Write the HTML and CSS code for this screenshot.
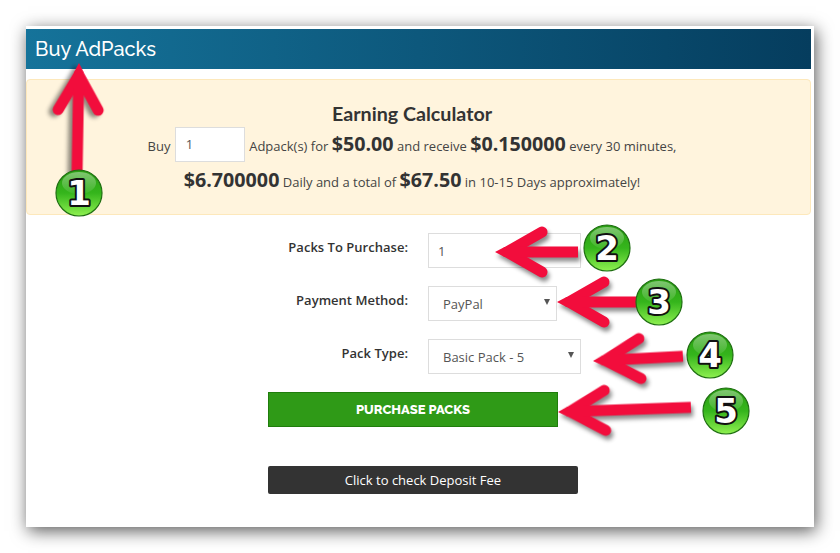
FILE: index.html
```html
<!DOCTYPE html>
<html lang="en">
<head>
    <meta charset="UTF-8">
    <meta name="viewport" content="width=device-width, initial-scale=1.0">
    <title>Buy AdPacks</title>
    <link rel="stylesheet" href="styles.css">
</head>
<body>
    <div class="panel">
        <h1 class="panel-title">Buy AdPacks</h1>

        <div class="calculator">
            <h3 class="calculator-title">Earning Calculator</h3>
            <p class="calculator-line first">
                Buy <input type="text" class="calculator-input" value="1"> Adpack(s) for <b>$50.00</b> and receive <b>$0.150000</b> every 30 minutes,
            </p>
            <p class="calculator-line">
                <b>$6.700000</b> Daily and a total of <b>$67.50</b> in 10-15 Days approximately!
            </p>
        </div>

        <form class="purchase-form">
            <label for="packs">Packs To Purchase:</label>
            <input type="text" id="packs" class="field wide" value="1">

            <label for="method">Payment Method:</label>
            <div class="select-wrap narrow">
                <select id="method" class="field">
                    <option>PayPal</option>
                </select>
            </div>

            <label for="type">Pack Type:</label>
            <div class="select-wrap wide">
                <select id="type" class="field">
                    <option>Basic Pack - 5</option>
                </select>
            </div>

            <button type="submit" class="btn-purchase">PURCHASE PACKS</button>
        </form>

        <button type="button" class="btn-fee">Click to check Deposit Fee</button>
    </div>

    <!-- flechas y numeros dibujados encima de la captura -->
    <svg class="notes" width="840" height="553" viewBox="0 0 840 553">
        <defs>
            <g id="head">
                <path class="arrow-barb" d="M12 0 L47 -20 M12 0 L47 20"/>
                <polygon class="arrow-fill" points="0,0 9.5,-5 32,-5 32,5 9.5,5"/>
            </g>
            <linearGradient id="ball" x1="0" y1="0" x2="0" y2="1">
                <stop offset="0" stop-color="#2a9e12"/>
                <stop offset="0.5" stop-color="#35b51c"/>
                <stop offset="1" stop-color="#8ef050"/>
            </linearGradient>
            <linearGradient id="gloss" x1="0" y1="0" x2="0" y2="1">
                <stop offset="0" stop-color="#ffffff" stop-opacity="0.4"/>
                <stop offset="1" stop-color="#ffffff" stop-opacity="0.05"/>
            </linearGradient>
            <g id="ball-shape">
                <circle r="23" fill="url(#ball)" stroke="#1f6f12" stroke-width="1.2"/>
                <ellipse cy="-10" rx="17" ry="11" fill="url(#gloss)"/>
            </g>
        </defs>

        <g class="arrow" transform="translate(79 63) rotate(91)">
            <use href="#head"/>
            <line class="arrow-shaft" x1="25" y1="0" x2="112" y2="0"/>
        </g>
        <g class="arrow" transform="translate(495 252)">
            <use href="#head"/>
            <line class="arrow-shaft" x1="25" y1="0" x2="83" y2="0"/>
        </g>
        <g class="arrow" transform="translate(557 302)">
            <use href="#head"/>
            <line class="arrow-shaft" x1="25" y1="0" x2="85" y2="0"/>
        </g>
        <g class="arrow" transform="translate(593 361) rotate(-3)">
            <use href="#head"/>
            <line class="arrow-shaft" x1="25" y1="0" x2="90" y2="0"/>
        </g>
        <g class="arrow" transform="translate(558 412) rotate(-2)">
            <use href="#head"/>
            <line class="arrow-shaft" x1="25" y1="0" x2="133" y2="0"/>
        </g>

        <g class="badge" transform="translate(79 193)"><use href="#ball-shape"/><text y="12">1</text></g>
        <g class="badge" transform="translate(607 248)"><use href="#ball-shape"/><text y="12">2</text></g>
        <g class="badge" transform="translate(659 302)"><use href="#ball-shape"/><text y="12">3</text></g>
        <g class="badge" transform="translate(710 355)"><use href="#ball-shape"/><text y="12">4</text></g>
        <g class="badge" transform="translate(726 411)"><use href="#ball-shape"/><text y="12">5</text></g>
    </svg>
</body>
</html>
```

FILE: styles.css
```css
html, body {
    height: 553px;
    overflow: hidden;
}

body {
    font-family: "Open Sans", sans-serif;
    background-color: #fff;
    color: #333;
    margin: 0;
    padding: 26px 26px 0;
    box-sizing: border-box;
}

.panel {
    box-sizing: border-box;
    width: 788px;
    height: 501px;
    padding: 3px 3px 0 0;
    background-color: #fff;
    box-shadow: 2px 4px 16px rgba(0, 0, 0, 0.65);
}

.panel-title {
    margin: 0 0 10px;
    height: 40px;
    padding: 0 9px;
    font-family: "Raleway", Lato, sans-serif;
    font-size: 20px;
    font-weight: 500;
    line-height: 40px;
    color: #fff;
    background: linear-gradient(to right, #15739a, #053d5e);
}

.calculator {
    box-sizing: border-box;
    height: 136px;
    padding: 22px 13px 0 0;
    text-align: center;
    background-color: #fff4dd;
    border: 1px solid #fde8bb;
    border-radius: 4px;
}

.calculator-title {
    margin: 0;
    font-family: Lato, sans-serif;
    font-size: 19.7px;
    font-weight: 700;
    line-height: 24px;
    color: #333;
}

.calculator-line {
    margin: 0;
    font-size: 13px;
    line-height: 35px;
    color: #444;
}

.calculator-line.first {
    height: 36px;
    margin-top: 0;
}

.calculator-line b {
    font-size: 19.7px;
    font-weight: 700;
    color: #333;
}

.calculator-input {
    box-sizing: border-box;
    width: 70px;
    height: 35px;
    margin: 0 1px;
    padding: 0 10px;
    vertical-align: 2px;
    font-family: "Open Sans", sans-serif;
    font-size: 13px;
    color: #555;
    background-color: #fff;
    border: 1px solid #ddd;
}

.purchase-form {
    display: grid;
    grid-template-columns: 140px 1fr;
    column-gap: 20px;
    row-gap: 18px;
    width: 310px;
    margin: 18px 0 0 242px;
}

.purchase-form label {
    padding-top: 6px;
    font-size: 13px;
    font-weight: 600;
    letter-spacing: 0.02px;
    line-height: 16px;
    text-align: right;
    color: #333;
}

.field {
    box-sizing: border-box;
    display: block;
    width: 100%;
    height: 35px;
    padding: 0 9px;
    font-family: "Open Sans", sans-serif;
    font-size: 13px;
    color: #555;
    background-color: #fff;
    border: 1px solid #ddd;
    border-radius: 0;
    appearance: none;
}

select.field {
    padding-left: 14px;
}

.wide {
    width: 153px;
}

.narrow {
    width: 129px;
}

.select-wrap {
    position: relative;
}

.select-wrap::after {
    content: "";
    position: absolute;
    top: 13px;
    right: 7px;
    border-top: 6px solid #555;
    border-left: 3px solid transparent;
    border-right: 3px solid transparent;
}

.btn-purchase {
    grid-column: 1 / 3;
    box-sizing: border-box;
    width: 290px;
    height: 35px;
    padding: 0 0 1px;
    font-family: "Raleway", Lato, sans-serif;
    font-size: 13px;
    font-weight: 800;
    color: #fff;
    background-color: #2f9a17;
    border: 1px solid #1f7d0c;
}

.btn-fee {
    display: block;
    box-sizing: border-box;
    width: 310px;
    height: 28px;
    margin: 39px 0 0 242px;
    padding: 0;
    font-family: "Open Sans", sans-serif;
    font-size: 13px;
    color: #fff;
    background-color: #333;
    border: none;
    border-radius: 2px;
}

/* capa de anotaciones */
.notes {
    position: absolute;
    top: 0;
    left: 0;
}

.arrow {
    filter: drop-shadow(2px 4px 2px rgba(0, 0, 0, 0.45));
}

.arrow-barb {
    fill: none;
    stroke: #f20d3c;
    stroke-width: 11;
    stroke-linecap: round;
}

.arrow-fill {
    fill: #f20d3c;
}

.arrow-shaft {
    stroke: #f20d3c;
    stroke-width: 11;
}

.badge text {
    font-family: "DejaVu Sans", sans-serif;
    font-size: 34px;
    font-weight: 700;
    text-anchor: middle;
    fill: #fff;
    stroke: #111;
    stroke-width: 4;
    stroke-linejoin: round;
    paint-order: stroke;
}
```
